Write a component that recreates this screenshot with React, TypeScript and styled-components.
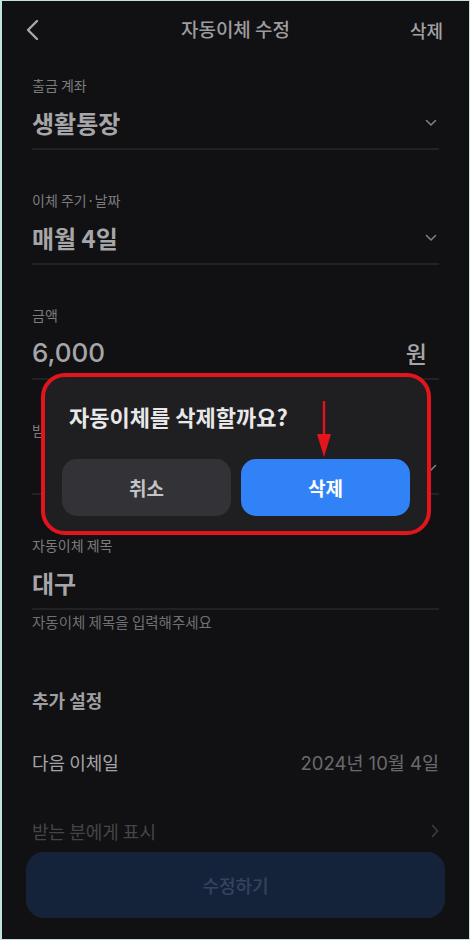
import React from 'react';
import styled, { createGlobalStyle } from 'styled-components';

const GlobalStyle = createGlobalStyle`
  * { box-sizing: border-box; }
  html, body { margin: 0; padding: 0; background: #111113; }
  body { font-family: "Noto Sans CJK KR", "Noto Sans", sans-serif; }
`;

const Screen = styled.div`
  position: relative;
  width: 470px;
  height: 940px;
  overflow: hidden;
  background: #111113;
  border: 1px solid #c3e4d8;
  border-left-width: 2px;
`;

const Header = styled.header`
  height: 58px;
  display: flex;
  align-items: center;
  justify-content: space-between;
  padding: 0 26px 0 23px;
`;

const HeaderTitle = styled.h1`
  margin: 0;
  font-size: 19px;
  font-weight: 500;
  color: #9c9c9e;
  position: absolute;
  left: 0;
  right: 0;
  top: 15px;
  text-align: center;
  line-height: 26px;
  pointer-events: none;
`;

const HeaderAction = styled.span`
  font-size: 18px;
  font-weight: 500;
  color: #a2a2a4;
`;

const Content = styled.main`
  padding: 17px 30px 0 30px;
  display: flex;
  flex-direction: column;
`;

const Field = styled.div`
  margin-bottom: 41px;
`;

const Label = styled.div`
  font-size: 14px;
  line-height: 18px;
  color: #7c7c7e;
`;

const ValueRow = styled.div`
  margin-top: 12px;
  height: 34px;
  display: flex;
  align-items: center;
  justify-content: space-between;
  padding-right: 2px;
`;

const Value = styled.span`
  font-size: 24px;
  font-weight: 700;
  color: #a6a6a8;
  line-height: 34px;
`;

const Amount = styled.span`
  font-family: Inter, "Noto Sans CJK KR", sans-serif;
  font-size: 26px;
  font-weight: 500;
  color: #a6a6a8;
  line-height: 34px;
`;

const Unit = styled.span`
  font-size: 23px;
  font-weight: 500;
  color: #a6a6a8;
  margin-right: 10px;
`;

const Divider = styled.div`
  margin-top: 8px;
  height: 2px;
  background: #222224;
`;

const Helper = styled.div`
  margin-top: 3px;
  font-size: 14.5px;
  line-height: 18px;
  color: #707072;
`;

const SectionTitle = styled.h2`
  margin: 57px 0 0 0;
  font-size: 18px;
  font-weight: 700;
  line-height: 24px;
  color: #a0a0a2;
`;

const SettingRow = styled.div<{ $dim?: boolean; $gap: number }>`
  margin-top: ${(p) => p.$gap}px;
  display: flex;
  align-items: center;
  justify-content: space-between;
  height: 26px;
  font-size: 18px;
  color: ${(p) => (p.$dim ? '#454547' : '#a4a4a6')};
`;

const SettingValue = styled.span`
  font-family: Inter, "Noto Sans CJK KR", sans-serif;
  font-size: 18.5px;
  color: #6a6a6c;
`;

const Footer = styled.div`
  position: absolute;
  left: 24px;
  right: 24px;
  bottom: 21px;
  height: 66px;
  border-radius: 18px;
  background: #15233a;
  display: flex;
  align-items: center;
  justify-content: center;
  font-size: 18px;
  font-weight: 500;
  color: #35445c;
`;

const Dialog = styled.div`
  position: absolute;
  left: 39px;
  top: 372px;
  width: 390px;
  height: 162px;
  border: 4px solid #e2151d;
  border-radius: 24px;
  background: #1f1f21;
  padding: 24px 17px 0 17px;
`;

const DialogTitle = styled.div`
  padding-left: 7px;
  font-size: 22px;
  font-weight: 700;
  line-height: 30px;
  color: #e8e8ea;
`;

const DialogButtons = styled.div`
  margin-top: 28px;
  display: grid;
  grid-template-columns: 1fr 1fr;
  gap: 10px;
`;

const DialogButton = styled.button<{ $primary?: boolean }>`
  height: 57px;
  border: none;
  border-radius: 15px;
  font-family: inherit;
  font-size: 19px;
  font-weight: 700;
  background: ${(p) => (p.$primary ? '#3182f6' : '#333337')};
  color: ${(p) => (p.$primary ? '#ffffff' : '#c4c4c6')};
`;

const Arrow = styled.svg`
  position: absolute;
  left: 314px;
  top: 400px;
`;

const ChevronDown = () => (
  <svg width="12" height="8" viewBox="0 0 12 8" fill="none">
    <path d="M1.5 1.5 L6 6 L10.5 1.5" stroke="#7e7e80" strokeWidth="1.6" strokeLinecap="round" strokeLinejoin="round" />
  </svg>
);

const ChevronRight = () => (
  <svg width="8" height="14" viewBox="0 0 8 14" fill="none">
    <path d="M1.5 1.5 L6.5 7 L1.5 12.5" stroke="#3e3e40" strokeWidth="1.6" strokeLinecap="round" strokeLinejoin="round" />
  </svg>
);

const BackIcon = () => (
  <svg width="16" height="22" viewBox="0 0 16 22" fill="none">
    <path d="M12 2 L3 11 L12 20" stroke="#a8a8aa" strokeWidth="2.4" strokeLinecap="round" strokeLinejoin="round" />
  </svg>
);

export default function App() {
  return (
    <>
      <GlobalStyle />
      <Screen>
        <Header>
          <BackIcon />
          <HeaderTitle>자동이체 수정</HeaderTitle>
          <HeaderAction>삭제</HeaderAction>
        </Header>

        <Content>
          <Field>
            <Label>출금 계좌</Label>
            <ValueRow>
              <Value>생활통장</Value>
              <ChevronDown />
            </ValueRow>
            <Divider />
          </Field>

          <Field>
            <Label>이체 주기·날짜</Label>
            <ValueRow>
              <Value>매월 4일</Value>
              <ChevronDown />
            </ValueRow>
            <Divider />
          </Field>

          <Field>
            <Label>금액</Label>
            <ValueRow>
              <Amount>6,000</Amount>
              <Unit>원</Unit>
            </ValueRow>
            <Divider />
          </Field>

          <Field>
            <Label>받는 분 통장 표시</Label>
            <ValueRow>
              <span />
              <ChevronDown />
            </ValueRow>
            <Divider />
          </Field>

          <div>
            <Label>자동이체 제목</Label>
            <ValueRow>
              <Value>대구</Value>
            </ValueRow>
            <Divider />
            <Helper>자동이체 제목을 입력해주세요</Helper>
          </div>

          <SectionTitle>추가 설정</SectionTitle>

          <SettingRow $gap={37}>
            <span>다음 이체일</span>
            <SettingValue>2024년 10월 4일</SettingValue>
          </SettingRow>

          <SettingRow $gap={43} $dim>
            <span>받는 분에게 표시</span>
            <ChevronRight />
          </SettingRow>
        </Content>

        <Footer>수정하기</Footer>

        <Dialog>
          <DialogTitle>자동이체를 삭제할까요?</DialogTitle>
          <DialogButtons>
            <DialogButton>취소</DialogButton>
            <DialogButton $primary>삭제</DialogButton>
          </DialogButtons>
        </Dialog>

        <Arrow width="16" height="56" viewBox="0 0 16 56">
          <path d="M8 0 V40" stroke="#e3141c" strokeWidth="2.4" />
          <path d="M1 33 L8 56 L15 33 Z" fill="#e3141c" />
        </Arrow>
      </Screen>
    </>
  );
}
